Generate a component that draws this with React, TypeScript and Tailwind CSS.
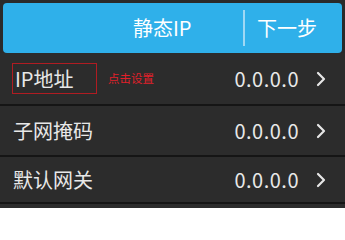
import React from "react";

const font = { fontFamily: '"Noto Sans CJK SC", "Noto Sans", sans-serif' };

function Chevron() {
  return (
    <svg width="12" height="16" viewBox="0 0 12 16" className="ml-[16px]">
      <path d="M3 2 L9 8 L3 14" fill="none" stroke="#e6e6e6" strokeWidth="2.2" strokeLinecap="round" strokeLinejoin="round" />
    </svg>
  );
}

function Row({ label, boxed, h }: { label: string; boxed?: boolean; h: string }) {
  return (
    <div className={`flex items-center ${h} pl-[12px] pr-[18px] bg-[#2c2c2c]`}>
      {boxed ? (
        <div className="flex items-center">
          <div className="w-[85px] h-[31px] border border-[#b01c22] flex items-center pl-[2px] text-[20px] text-[#e8e8e8] leading-none">
            {label}
          </div>
          <span className="ml-[11px] text-[11.5px] text-[#e0202a] leading-none">点击设置</span>
        </div>
      ) : (
        <span className="pl-[1px] text-[20px] text-[#e8e8e8] leading-none">{label}</span>
      )}
      <span className="ml-auto text-[20px] text-[#e8e8e8] leading-none tracking-[0.5px]">0.0.0.0</span>
      <Chevron />
    </div>
  );
}

export default function App() {
  return (
    <div className="w-[345px] h-[208px] bg-[#262626] overflow-hidden flex flex-col" style={font}>
      <div className="pt-[3px] px-[3px] bg-[#2a2a2a]">
        <div className="h-[50px] rounded-[4px] bg-[#2fb0ea] flex items-center text-white text-[20px] leading-none">
          <div className="flex-1 pl-[130px]">静态IP</div>
          <div className="w-[2px] h-[36px] bg-[#9fd8f4]" />
          <div className="w-[97px] pl-[12px]">下一步</div>
        </div>
      </div>
      <Row label="IP地址" boxed h="h-[51px]" />
      <div className="h-[2px] bg-[#151515]" />
      <Row label="子网掩码" h="h-[49px]" />
      <div className="h-[2px] bg-[#151515]" />
      <Row label="默认网关" h="h-[45px]" />
      <div className="h-[2px] bg-[#151515]" />
      <div className="flex-1 bg-[#2c2c2c]" />
    </div>
  );
}
